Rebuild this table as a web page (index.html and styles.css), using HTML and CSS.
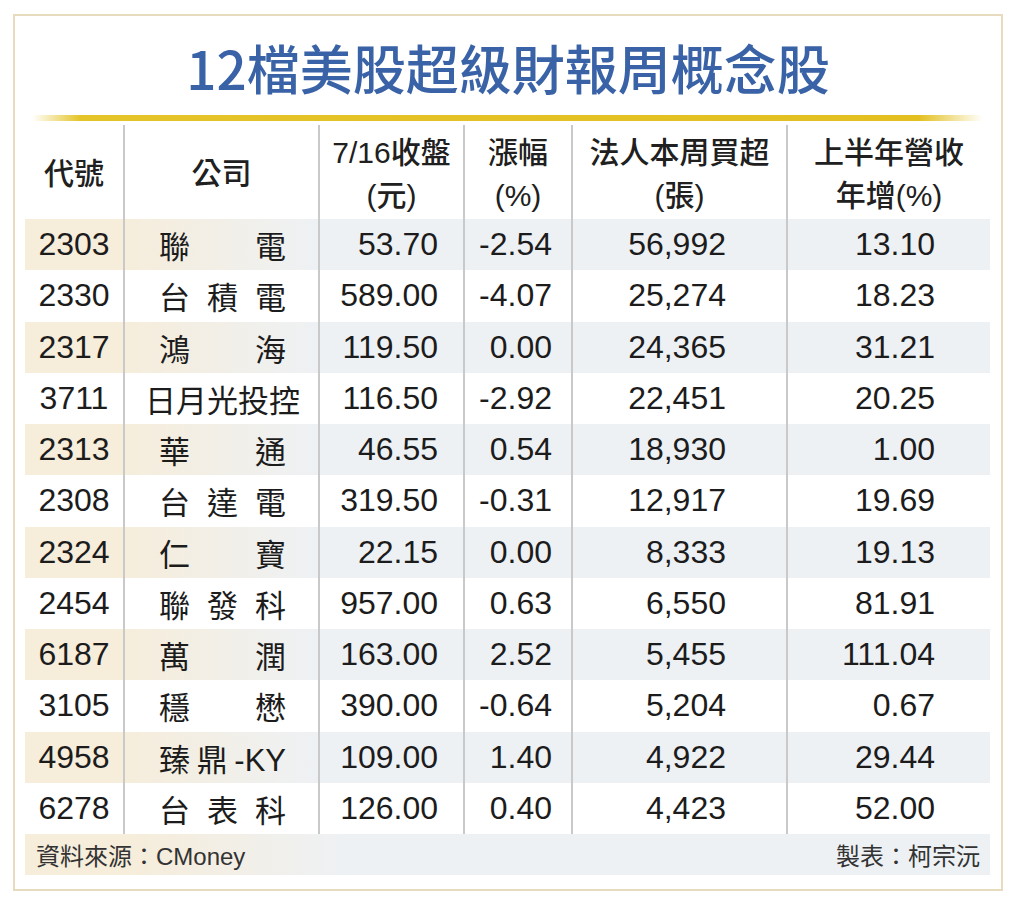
FILE: index.html
```html
<!DOCTYPE html>
<html lang="zh-Hant">
<head>
<meta charset="utf-8">
<title>12檔美股超級財報周概念股</title>
<link rel="stylesheet" href="styles.css">
</head>
<body>
<div class="frame">
  <h1 class="title">12檔美股超級財報周概念股</h1>
  <div class="rule"></div>
  <div class="table">
    <div class="row head">
      <div class="cell">代號</div>
      <div class="cell">公司</div>
      <div class="cell">7/16收盤<br>(元)</div>
      <div class="cell">漲幅<br>(%)</div>
      <div class="cell">法人本周買超<br>(張)</div>
      <div class="cell">上半年營收<br>年增(%)</div>
    </div>
    <div class="row alt"><div class="cell code">2303</div><div class="cell co"><span class="name">聯電</span></div><div class="cell n3">53.70</div><div class="cell n4">-2.54</div><div class="cell n5">56,992</div><div class="cell n6">13.10</div></div>
    <div class="row"><div class="cell code">2330</div><div class="cell co"><span class="name">台積電</span></div><div class="cell n3">589.00</div><div class="cell n4">-4.07</div><div class="cell n5">25,274</div><div class="cell n6">18.23</div></div>
    <div class="row alt"><div class="cell code">2317</div><div class="cell co"><span class="name">鴻海</span></div><div class="cell n3">119.50</div><div class="cell n4">0.00</div><div class="cell n5">24,365</div><div class="cell n6">31.21</div></div>
    <div class="row"><div class="cell code">3711</div><div class="cell co"><span class="name">日月光投控</span></div><div class="cell n3">116.50</div><div class="cell n4">-2.92</div><div class="cell n5">22,451</div><div class="cell n6">20.25</div></div>
    <div class="row alt"><div class="cell code">2313</div><div class="cell co"><span class="name">華通</span></div><div class="cell n3">46.55</div><div class="cell n4">0.54</div><div class="cell n5">18,930</div><div class="cell n6">1.00</div></div>
    <div class="row"><div class="cell code">2308</div><div class="cell co"><span class="name">台達電</span></div><div class="cell n3">319.50</div><div class="cell n4">-0.31</div><div class="cell n5">12,917</div><div class="cell n6">19.69</div></div>
    <div class="row alt"><div class="cell code">2324</div><div class="cell co"><span class="name">仁寶</span></div><div class="cell n3">22.15</div><div class="cell n4">0.00</div><div class="cell n5">8,333</div><div class="cell n6">19.13</div></div>
    <div class="row"><div class="cell code">2454</div><div class="cell co"><span class="name">聯發科</span></div><div class="cell n3">957.00</div><div class="cell n4">0.63</div><div class="cell n5">6,550</div><div class="cell n6">81.91</div></div>
    <div class="row alt"><div class="cell code">6187</div><div class="cell co"><span class="name">萬潤</span></div><div class="cell n3">163.00</div><div class="cell n4">2.52</div><div class="cell n5">5,455</div><div class="cell n6">111.04</div></div>
    <div class="row"><div class="cell code">3105</div><div class="cell co"><span class="name">穩懋</span></div><div class="cell n3">390.00</div><div class="cell n4">-0.64</div><div class="cell n5">5,204</div><div class="cell n6">0.67</div></div>
    <div class="row alt"><div class="cell code">4958</div><div class="cell co"><span class="name ky">臻鼎-KY</span></div><div class="cell n3">109.00</div><div class="cell n4">1.40</div><div class="cell n5">4,922</div><div class="cell n6">29.44</div></div>
    <div class="row"><div class="cell code">6278</div><div class="cell co"><span class="name">台表科</span></div><div class="cell n3">126.00</div><div class="cell n4">0.40</div><div class="cell n5">4,423</div><div class="cell n6">52.00</div></div>
  </div>
  <div class="foot">
    <span>資料來源：CMoney</span>
    <span>製表：柯宗沅</span>
  </div>
</div>
</body>
</html>
```
FILE: styles.css
```css
html, body {
  margin: 0;
  padding: 0;
  background: #ffffff;
}

body {
  font-family: "Liberation Sans", "Noto Sans CJK TC", sans-serif;
  color: #1c1c1c;
}

.frame {
  box-sizing: border-box;
  width: 990px;
  height: 877px;
  margin: 14px 0 0 13px;
  border: 2px solid #e6dcbd;
  background: #ffffff;
}

.title {
  margin: 0;
  padding-top: 25px;
  height: 53px;
  line-height: 53px;
  font-family: "Noto Sans CJK TC", sans-serif;
  font-size: 53px;
  font-weight: 500;
  color: #3a63a7;
  text-align: center;
  letter-spacing: 0;
}

.rule {
  height: 6px;
  margin: 21px 18px 0 17px;
  background: linear-gradient(to right,
    rgba(228, 194, 36, 0) 0,
    #e5c42a 48px,
    #e3c020 calc(100% - 64px),
    rgba(228, 194, 36, 0) 100%);
}

.table {
  margin: 4px 11px 0 10px;
}

.row {
  display: grid;
  grid-template-columns: 98px 195px 145px 108px 215px 204px;
  height: 51.25px;
}

.row.alt {
  background: linear-gradient(to right, #f6eddb 0, #f6eddb 100px, #eef1f4 290px, #eef1f4 100%);
}

.row.head {
  height: 94px;
}

.cell {
  box-sizing: border-box;
  display: flex;
  align-items: center;
  justify-content: flex-end;
  font-size: 32px;
  white-space: nowrap;
}

.cell + .cell {
  border-left: 2px solid #c9c9c9;
}

.head .cell {
  justify-content: center;
  text-align: center;
  font-size: 30px;
  line-height: 43px;
  font-weight: 500;
  color: #202020;
  padding-top: 3px;
}

.code {
  justify-content: center;
}

.co {
  justify-content: center;
  padding-left: 2px;
}

.name {
  display: inline-block;
  min-width: 127px;
  font-size: 31px;
  text-align: justify;
  text-align-last: justify;
  text-justify: inter-character;
}

.n3 { padding-right: 25px; }
.n4 { padding-right: 19px; }
.n5 { padding-right: 60px; }
.n6 { padding-right: 55px; }

.foot {
  display: flex;
  justify-content: space-between;
  align-items: center;
  height: 41px;
  margin: 0 11px 0 10px;
  padding: 0 10px 0 11px;
  background: linear-gradient(to right, #f6eddb 0, #f6eddb 110px, #eef1f4 320px, #eef1f4 100%);
  font-size: 24px;
  color: #333333;
}
```
